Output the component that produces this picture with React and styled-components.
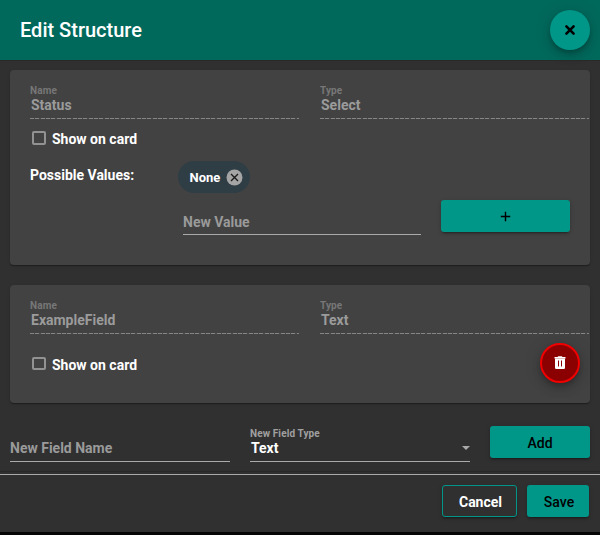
import React from "react";
import styled, { createGlobalStyle } from "styled-components";

const GlobalStyle = createGlobalStyle`
  * { box-sizing: border-box; }
  body {
    margin: 0;
    background: #050505;
    font-family: Roboto, "Liberation Sans", sans-serif;
    font-size: 14px;
    font-weight: 700;
    color: #fff;
  }
  button { font-family: inherit; padding: 0; border: 0; }
`;

const Dialog = styled.div`
  width: 600px;
  height: 535px;
  background: #303030;
  border-bottom: 3px solid #050505;
  display: flex;
  flex-direction: column;
  overflow: hidden;
`;

const Header = styled.header`
  height: 60px;
  flex: none;
  display: flex;
  align-items: center;
  justify-content: space-between;
  padding: 0 10px 0 20px;
  background: #00695c;
`;

const Title = styled.h1`
  margin: 0;
  font-size: 20px;
  line-height: 32px;
  font-weight: 500;
`;

const RoundButton = styled.button`
  width: 40px;
  height: 40px;
  flex: none;
  border-radius: 50%;
  display: flex;
  align-items: center;
  justify-content: center;
  background: ${(p) => (p.$danger ? "#8b0000" : "#009688")};
  border: ${(p) => (p.$danger ? "2px solid #f00000" : "0")};
  box-shadow: 0 3px 5px -1px rgba(0, 0, 0, 0.2), 0 6px 10px rgba(0, 0, 0, 0.14),
    0 1px 18px rgba(0, 0, 0, 0.12);
`;

const Content = styled.main`
  height: 412px;
  flex: none;
  padding: 9px 10px 0;
  border-top: 1px solid #292929;
  border-bottom: 1px solid #282828;
`;

const Card = styled.section`
  height: ${(p) => p.$height}px;
  margin-bottom: 20px;
  padding: 16px 0 0 20px;
  border-radius: 4px;
  background: #424242;
  box-shadow: 0 2px 1px -1px rgba(0, 0, 0, 0.2), 0 1px 1px rgba(0, 0, 0, 0.14),
    0 1px 3px rgba(0, 0, 0, 0.12);
`;

const FieldRow = styled.div`
  display: grid;
  grid-template-columns: 269px 269px;
  column-gap: 21px;
`;

const Field = styled.div`
  height: 33px;
  padding-left: 1px;
  color: ${(p) => (p.$disabled ? "#9b9b9b" : "#fff")};
  line-height: 16px;
  background: ${(p) =>
    p.$disabled
      ? "repeating-linear-gradient(90deg, #868686 0 4px, #4c4c4c 4px 5.33px) left bottom / 100% 1px no-repeat"
      : "linear-gradient(#aaa, #aaa) left bottom / 100% 1px no-repeat"};
`;

const FieldLabel = styled.div`
  height: 11px;
  margin-left: -1px;
  font-size: 10px;
  letter-spacing: 0.12px;
  line-height: 9px;
  color: ${(p) => (p.$disabled ? "#777" : "#a0a0a0")};
`;

const CheckRow = styled.label`
  height: 20px;
  display: flex;
  align-items: center;
  gap: 6px;
`;

const CheckBox = styled.span`
  width: 14px;
  height: ${(p) => p.$height}px;
  margin: 0 0 2px 2px;
  border: 2px solid #929292;
  border-radius: 2px;
`;

const FirstCheck = styled.div`
  padding-top: 10px;
`;

const SecondCheck = styled.div`
  display: flex;
  justify-content: space-between;
  align-items: center;
  padding: 9px 10px 0 0;

  ${CheckRow} {
    margin-top: 4px;
  }

  ${CheckBox} {
    margin-bottom: 3px;
  }
`;

const ValuesRow = styled.div`
  display: grid;
  grid-template-columns: 148px auto;
  margin-top: 12px;
`;

const ValuesLabel = styled.div`
  padding-top: 6px;
  line-height: 16px;
`;

const Chip = styled.div`
  width: 72px;
  height: 32px;
  border-radius: 16px;
  padding: 0 7px 0 11.5px;
  display: flex;
  align-items: center;
  justify-content: space-between;
  background: #2f3d45;
  font-size: 13px;
`;

const NewValueRow = styled.div`
  display: grid;
  grid-template-columns: 238px 129px;
  column-gap: 20px;
  margin: 7px 0 0 153px;
`;

const Input = styled.div`
  height: ${(p) => p.$height}px;
  display: flex;
  align-items: flex-end;
  padding-bottom: ${(p) => p.$gap}px;
  border-bottom: 1px solid #aaa;
  color: #9a9a9a;
  line-height: 16px;
`;

const Button = styled.button`
  height: 32px;
  width: ${(p) => p.$width}px;
  display: flex;
  align-items: center;
  justify-content: center;
  padding-top: 2px;
  border-radius: 3px;
  font-size: 14px;
  line-height: 16px;
  font-weight: ${(p) => (p.$outlined ? 700 : 500)};
  color: ${(p) => (p.$outlined ? "#fff" : "#000")};
  background: ${(p) => (p.$outlined ? "#303030" : "#009688")};
  border: ${(p) => (p.$outlined ? "1px solid #009688" : "0")};
  box-shadow: 0 3px 1px -2px rgba(0, 0, 0, 0.2), 0 2px 2px rgba(0, 0, 0, 0.14),
    0 1px 5px rgba(0, 0, 0, 0.12);
`;

const IconButton = styled(Button)`
  padding-top: 1px;
`;

const FooterButton = styled(Button)`
  padding-left: 2px;
`;

const AddRow = styled.div`
  display: grid;
  grid-template-columns: 220px 220px 100px;
  column-gap: 20px;
  margin-top: 23px;

  ${Field} {
    margin-top: 3px;
  }
`;

const SelectValue = styled.div`
  display: flex;
  justify-content: space-between;
  align-items: center;
`;

const Footer = styled.footer`
  margin-top: 2px;
  flex: 1;
  display: flex;
  justify-content: flex-end;
  gap: 10px;
  padding: 10px 11px 0 0;
  border-top: 1px solid #aaa;
`;

const Close = () => (
  <svg width="12" height="12" viewBox="0 0 12 12">
    <path d="M2.4 2.4 9.6 9.6M9.6 2.4 2.4 9.6" stroke="#000" strokeWidth="2.6" strokeLinecap="round" />
  </svg>
);

const Remove = () => (
  <svg width="17" height="17" viewBox="0 0 17 17">
    <circle cx="8.5" cy="8.5" r="8" fill="#a5a5a5" />
    <path d="M5 5 12 12M12 5 5 12" stroke="#1c1c1c" strokeWidth="1.4" />
  </svg>
);

const Plus = () => (
  <svg width="11" height="11" viewBox="0 0 11 11">
    <path d="M.8 5.5H10.2M5.5 .8V10.2" stroke="#000" strokeWidth="1.4" />
  </svg>
);

const Trash = () => (
  <svg width="12" height="14" viewBox="0 0 12 14">
    <path d="M.5 1h3l.7-.8h3.6l.7.8h3v1.6H.5z" fill="#fff" />
    <path d="M1 2.6h10v9.2q0 1.2-1.2 1.2H2.2Q1 13 1 11.8z" fill="#fff" />
    <path d="M4.5 4.5v6M7.5 4.5v6" stroke="#8b0000" strokeWidth="1" />
  </svg>
);

const Caret = () => (
  <svg width="8" height="4" viewBox="0 0 8 4">
    <path d="M0 0h8L4 4z" fill="#aaa" />
  </svg>
);

const StructureFields = ({ name, type }) => (
  <FieldRow>
    <Field $disabled>
      <FieldLabel $disabled>Name</FieldLabel>
      {name}
    </Field>
    <Field $disabled>
      <FieldLabel $disabled>Type</FieldLabel>
      {type}
    </Field>
  </FieldRow>
);

const ShowOnCard = ({ height }) => (
  <CheckRow>
    <CheckBox $height={height} />
    Show on card
  </CheckRow>
);

export default function App() {
  return (
    <>
      <GlobalStyle />
      <Dialog>
        <Header>
          <Title>Edit Structure</Title>
          <RoundButton aria-label="Close">
            <Close />
          </RoundButton>
        </Header>
        <Content>
          <Card $height={195}>
            <StructureFields name="Status" type="Select" />
            <FirstCheck>
              <ShowOnCard height={14} />
            </FirstCheck>
            <ValuesRow>
              <ValuesLabel>Possible Values:</ValuesLabel>
              <Chip>
                None
                <Remove />
              </Chip>
            </ValuesRow>
            <NewValueRow>
              <Input $height={35} $gap={4}>New Value</Input>
              <IconButton $width={129} aria-label="Add value">
                <Plus />
              </IconButton>
            </NewValueRow>
          </Card>
          <Card $height={118}>
            <StructureFields name="ExampleField" type="Text" />
            <SecondCheck>
              <ShowOnCard height={13} />
              <RoundButton $danger aria-label="Delete field">
                <Trash />
              </RoundButton>
            </SecondCheck>
          </Card>
          <AddRow>
            <Input $height={36} $gap={5}>New Field Name</Input>
            <Field>
              <FieldLabel>New Field Type</FieldLabel>
              <SelectValue>
                Text
                <Caret />
              </SelectValue>
            </Field>
            <Button $width={100}>Add</Button>
          </AddRow>
        </Content>
        <Footer>
          <FooterButton $outlined $width={75}>Cancel</FooterButton>
          <FooterButton $width={62}>Save</FooterButton>
        </Footer>
      </Dialog>
    </>
  );
}
